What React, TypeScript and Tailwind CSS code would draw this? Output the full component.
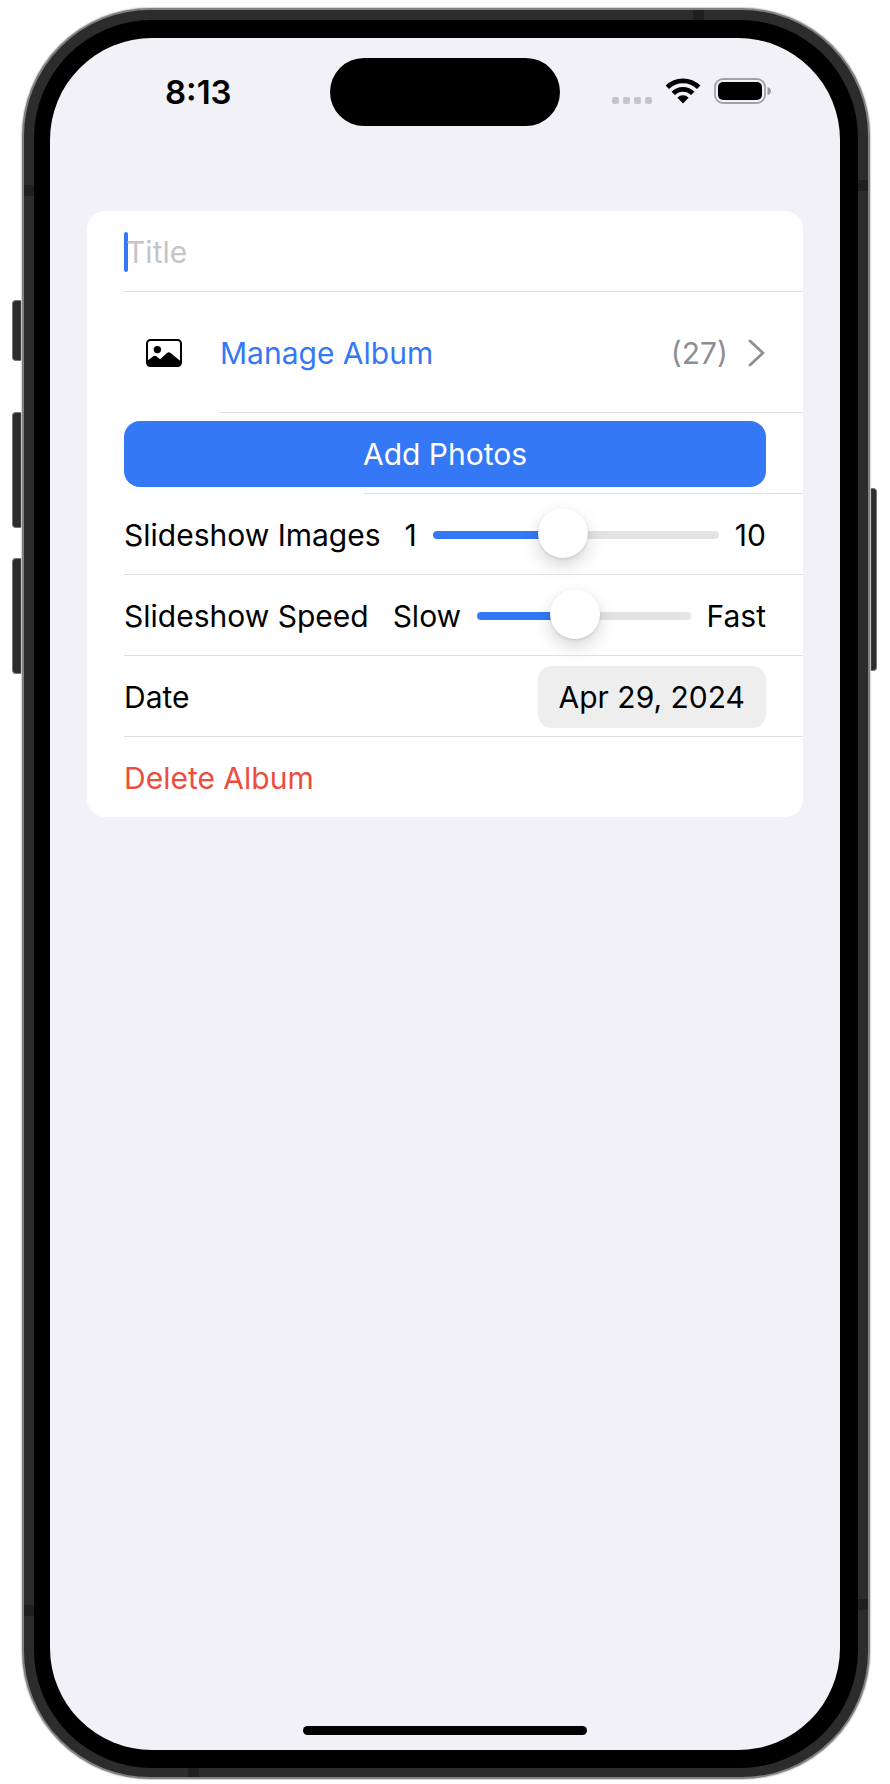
import { useState } from "react";
import type { CSSProperties, ReactNode } from "react";

function Row({ children, divider = "ml-[37px]" }: { children: ReactNode; divider?: string }) {
  return (
    <li className="flex flex-col">
      <div className="flex min-h-20 items-center px-[37px] pt-px">{children}</div>
      {divider && <div className={`h-px bg-[#dfdfe1] ${divider}`} />}
    </li>
  );
}

interface SliderRowProps {
  id: string;
  label: string;
  low: string;
  high: string;
}

function SliderRow({ id, label, low, high }: SliderRowProps) {
  const [value, setValue] = useState(5);
  const fill = { "--fill": `${((value - 1) / 9) * 100}%` } as CSSProperties;
  return (
    <Row>
      <label htmlFor={id} className="mr-6 whitespace-nowrap">
        {label}
      </label>
      <span>{low}</span>
      <input
        id={id}
        type="range"
        min={1}
        max={10}
        value={value}
        onChange={(e) => setValue(Number(e.target.value))}
        style={fill}
        className="mx-4 h-[50px] min-w-0 flex-1 appearance-none bg-transparent [&::-webkit-slider-runnable-track]:h-2 [&::-webkit-slider-runnable-track]:rounded-full [&::-webkit-slider-runnable-track]:bg-[linear-gradient(to_right,#3478f6_var(--fill),#e3e3e5_var(--fill))] [&::-webkit-slider-thumb]:-mt-[23px] [&::-webkit-slider-thumb]:size-[50px] [&::-webkit-slider-thumb]:appearance-none [&::-webkit-slider-thumb]:rounded-full [&::-webkit-slider-thumb]:bg-white [&::-webkit-slider-thumb]:shadow-[0_1px_3px_rgba(0,0,0,0.12),0_8px_18px_rgba(0,0,0,0.16)]"
      />
      <span>{high}</span>
    </Row>
  );
}

function PhotoIcon() {
  return (
    <svg viewBox="0 0 36 28" className="h-7 w-9" aria-hidden="true">
      <rect x="1" y="1" width="34" height="26" rx="3.4" fill="none" stroke="#000" strokeWidth="2" />
      <circle cx="11.4" cy="10.6" r="3.7" />
      <path d="M1 22 7.300 17.200q1.500-1 3 0l3.700 3 7-6.300q1.800-1.500 3.600 0l10.400 8.600V24q0 3.400-3.400 3.400H4.400q-3.400 0-3.400-3.400Z" />
    </svg>
  );
}

function StatusIcons() {
  return (
    <div className="flex items-center pb-0.5">
      <svg viewBox="0 0 40 26" className="h-[26px] w-10" fill="#c5c5c9" aria-hidden="true">
        <rect x="0" y="19" width="7" height="7" rx="2.2" />
        <rect x="11" y="19" width="7" height="7" rx="2.2" />
        <rect x="22" y="19" width="7" height="7" rx="2.2" />
        <rect x="33" y="19" width="7" height="7" rx="2.2" />
      </svg>
      <svg viewBox="0 0 36 26" className="ml-[13px] h-[26px] w-9" aria-hidden="true">
        <path d="M2.300 9.300a22.200 22.200 0 0 1 31.400 0" fill="none" stroke="#000" strokeWidth="4.800" />
        <path d="M8.200 15.400a13.900 13.900 0 0 1 19.600 0" fill="none" stroke="#000" strokeWidth="4.800" />
        <path d="M12.400 19.700a7.900 7.900 0 0 1 11.200 0L18 25.400Z" />
      </svg>
      <svg viewBox="0 0 58 26" className="ml-[13px] h-[26px] w-[58px]" aria-hidden="true">
        <rect x="1" y="1" width="50" height="24" rx="8" fill="none" stroke="#a2a2a6" strokeWidth="1.800" />
        <rect x="4" y="4" width="44" height="18" rx="5" />
        <path d="M53.500 9q3.500 1 3.500 4t-3.500 4Z" fill="#98989c" />
      </svg>
    </div>
  );
}

const sideButton = "rounded-l-sm border border-r-0 border-[#777] bg-[#2c2c2c]";

export default function App() {
  const [title, setTitle] = useState("");
  return (
    <div className="flex min-h-screen bg-white pt-2 pr-[13px] pb-[5px] pl-3 font-['Inter','Liberation_Sans',sans-serif] text-[30px] leading-9 text-black">
      <div className="flex w-[10px] flex-col pt-[292px]">
        <div className={`h-[61px] ${sideButton}`} />
        <div className={`mt-[51px] h-[116px] ${sideButton}`} />
        <div className={`mt-[30px] h-[116px] ${sideButton}`} />
      </div>

      <div className="relative flex flex-1 flex-col rounded-[128px] border-2 border-[#808080] bg-[#2c2c2c] px-[10px] pt-[10px] pb-[9px] shadow-[0_0_1px_1px_#d4d4d4]">
        <div className="absolute top-[175px] left-0 h-[11px] w-[10px] bg-[#1f1f1f]" />
        <div className="absolute bottom-[161px] left-0 h-[11px] w-[10px] bg-[#1f1f1f]" />
        <div className="absolute top-[170px] right-0 h-[11px] w-[10px] bg-[#1f1f1f]" />
        <div className="absolute right-0 bottom-[167px] h-[11px] w-[10px] bg-[#1f1f1f]" />
        <div className="absolute top-0 right-[164px] h-[10px] w-[11px] bg-[#1f1f1f]" />
        <div className="absolute bottom-0 left-[164px] h-[9px] w-[11px] bg-[#1f1f1f]" />

        <div className="flex flex-1 flex-col rounded-[118px] bg-black py-[18px] pr-[18px] pl-4">
          <div className="flex flex-1 flex-col rounded-[102px] bg-[#f2f1f7]">
            <header className="grid grid-cols-[1fr_auto_1fr] items-center pt-5">
              <time className="pl-[115px] text-[33px] font-semibold">8:13</time>
              <div className="h-[68px] w-[230px] rounded-full bg-black" />
              <div className="flex justify-end pr-[68px]">
                <StatusIcons />
              </div>
            </header>

            <main className="flex-1 px-[37px] pt-[85px]">
              <ul className="overflow-hidden rounded-[18px] bg-white">
                <Row>
                  <span className="h-10 w-1 rounded-full bg-[#3478f6]" />
                  <input
                    type="text"
                    aria-label="Title"
                    placeholder="Title"
                    value={title}
                    onChange={(e) => setTitle(e.target.value)}
                    className="-ml-0.5 min-w-0 flex-1 bg-transparent caret-transparent outline-none placeholder:text-[#c5c5c7]"
                  />
                </Row>
                <Row divider="ml-[132px]">
                  <a href="#album" className="flex h-[119px] flex-1 items-center">
                    <span className="flex w-24 pl-[22px]">
                      <PhotoIcon />
                    </span>
                    <span className="flex-1 text-[#3478f6]">Manage Album</span>
                    <span className="text-[#8e8e93]">(27)</span>
                    <svg viewBox="0 0 18 28" className="ml-5 h-7 w-[18px]" aria-hidden="true">
                      <path d="M2 2 15 14 2 26" fill="none" stroke="#8e8e93" strokeWidth="2.800" strokeLinecap="round" strokeLinejoin="round" />
                    </svg>
                  </a>
                </Row>
                <Row divider="ml-[277px]">
                  <button type="button" className="h-[66px] flex-1 rounded-2xl bg-[#3478f6] text-white">
                    Add Photos
                  </button>
                </Row>
                <SliderRow id="slideshow-images" label="Slideshow Images" low="1" high="10" />
                <SliderRow id="slideshow-speed" label="Slideshow Speed" low="Slow" high="Fast" />
                <Row>
                  <label htmlFor="album-date" className="flex-1">
                    Date
                  </label>
                  <button id="album-date" type="button" className="h-[62px] rounded-[14px] bg-[#eeeeef] px-[21px]">
                    Apr 29, 2024
                  </button>
                </Row>
                <Row divider="">
                  <button type="button" className="text-[#eb4e3d]">
                    Delete Album
                  </button>
                </Row>
              </ul>
            </main>

            <footer className="flex justify-center pb-[15px]">
              <div className="h-[9px] w-[284px] rounded-full bg-black" />
            </footer>
          </div>
        </div>
      </div>

      <div className="w-[7px] pt-[480px]">
        <div className="h-[183px] rounded-r-sm border border-l-0 border-[#777] bg-[#2c2c2c]" />
      </div>
    </div>
  );
}
